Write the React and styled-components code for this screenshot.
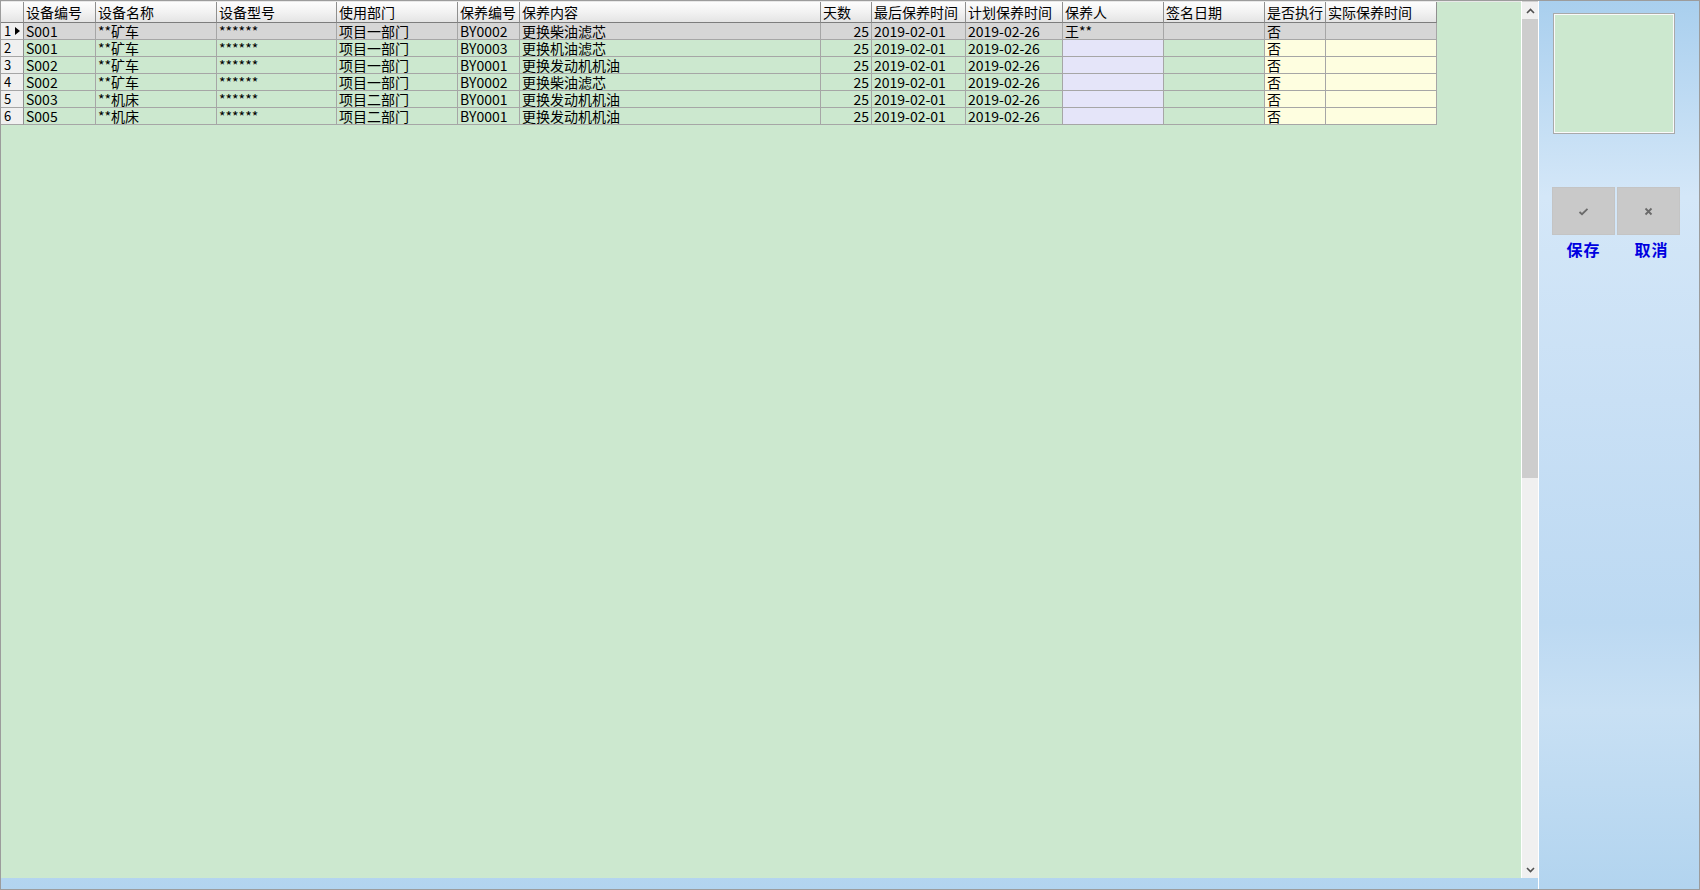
import React from "react";
import styled, { createGlobalStyle } from "styled-components";

const GlobalStyle = createGlobalStyle`
  html, body { margin: 0; padding: 0; background: #ffffff; }
  * { box-sizing: border-box; }
  body { font-family: "Noto Sans CJK SC", "Liberation Sans", sans-serif; }
`;

const COLS = [23, 72, 121, 120, 121, 62, 301, 51, 94, 97, 101, 101, 61, 111];

const HEADERS = [
  "",
  "设备编号",
  "设备名称",
  "设备型号",
  "使用部门",
  "保养编号",
  "保养内容",
  "天数",
  "最后保养时间",
  "计划保养时间",
  "保养人",
  "签名日期",
  "是否执行",
  "实际保养时间",
];

// column tint: g = green, l = lavender, y = yellow
const TINT = ["h", "g", "g", "g", "g", "g", "g", "g", "g", "g", "l", "g", "y", "y"];
const RIGHT = [false, false, false, false, false, false, false, true, false, false, false, false, false, false];

const ROWS = [
  ["S001", "**矿车", "******", "项目一部门", "BY0002", "更换柴油滤芯", "25", "2019-02-01", "2019-02-26", "王**", "", "否", ""],
  ["S001", "**矿车", "******", "项目一部门", "BY0003", "更换机油滤芯", "25", "2019-02-01", "2019-02-26", "", "", "否", ""],
  ["S002", "**矿车", "******", "项目一部门", "BY0001", "更换发动机机油", "25", "2019-02-01", "2019-02-26", "", "", "否", ""],
  ["S002", "**矿车", "******", "项目一部门", "BY0002", "更换柴油滤芯", "25", "2019-02-01", "2019-02-26", "", "", "否", ""],
  ["S003", "**机床", "******", "项目二部门", "BY0001", "更换发动机机油", "25", "2019-02-01", "2019-02-26", "", "", "否", ""],
  ["S005", "**机床", "******", "项目二部门", "BY0001", "更换发动机机油", "25", "2019-02-01", "2019-02-26", "", "", "否", ""],
];

const TINT_COLORS = {
  h: "#f0f0f0",
  g: "#cce8cf",
  l: "#e5e5f9",
  y: "#fefee0",
  s: "#d6d6d6",
};

const Window = styled.div`
  width: 1700px;
  height: 890px;
  border: 1px solid #9c9c9c;
  display: flex;
  overflow: hidden;
  background: linear-gradient(
    180deg,
    #a9cfee 0%,
    #d4e7f8 22%,
    #c9e0f5 45%,
    #bcd9f2 70%,
    #c8e0f4 80%,
    #b2d4ef 100%
  );
`;

const GridBlock = styled.div`
  width: 1537px;
  height: 877px;
  display: flex;
  flex-shrink: 0;
`;

const GridArea = styled.div`
  width: 1520px;
  height: 100%;
  background: #cce8cf;
  border-top: 1px solid #e8e8e8;
`;

const Divider = styled.div`
  width: 1px;
  height: 100%;
  background: #ffffff;
`;

const Table = styled.div`
  display: grid;
  grid-template-columns: ${COLS.map((w) => `${w}px`).join(" ")};
  grid-template-rows: 21px;
  grid-auto-rows: 17px;
  width: max-content;
`;

const HeaderCell = styled.div`
  padding: 0 2px;
  font-size: 14px;
  line-height: 20px;
  color: #000;
  white-space: nowrap;
  background: linear-gradient(180deg, #fdfdfd 0%, #f1f1f1 55%, #e4e4e4 100%);
  border-right: 1px solid #8f8f8f;
  border-bottom: 1px solid #7d7d7d;
`;

const Cell = styled.div`
  padding: 0 2px;
  font-size: 14px;
  line-height: 16px;
  color: #000;
  white-space: nowrap;
  text-align: ${(p) => (p.$right ? "right" : "left")};
  background: ${(p) => TINT_COLORS[p.$tint]};
  border-right: 1px solid #a6a6a6;
  border-bottom: 1px solid #a6a6a6;
`;

const RowHead = styled(Cell)`
  display: flex;
  align-items: center;
  gap: 4px;
  padding-left: 3px;
  font-size: 13px;
  background: #f0f0f0;
  border-right: 1px solid #8f8f8f;
`;

const Pointer = styled.span`
  width: 0;
  height: 0;
  border-top: 4px solid transparent;
  border-bottom: 4px solid transparent;
  border-left: 5px solid #000;
`;

const VScroll = styled.div`
  width: 16px;
  height: 100%;
  display: flex;
  flex-direction: column;
  background: #f0f0f0;
  border-top: 1px solid #d0d0d0;
`;

const ArrowBox = styled.div`
  height: 17px;
  display: flex;
  align-items: center;
  justify-content: center;
  background: #f0f0f0;
  flex-shrink: 0;
`;

const Thumb = styled.div`
  height: 459px;
  background: #cdcdcd;
  flex-shrink: 0;
`;

const Track = styled.div`
  flex: 1;
  background: #f0f0f0;
`;

const SidePanel = styled.div`
  flex: 1;
  height: 100%;
  border-left: 1px solid #ffffff;
  padding: 13px 0 0 15px;
  display: flex;
  flex-direction: column;
  align-items: flex-start;
`;

const Preview = styled.div`
  width: 120px;
  height: 119px;
  background: #cce8cf;
  border: 1px solid #fafafa;
  box-shadow: 0 0 0 1px #a9a9a9;
`;

const ButtonRow = styled.div`
  display: flex;
  gap: 2px;
  margin-top: 54px;
  margin-left: -2px;
`;

const ActionButton = styled.button`
  width: 63px;
  height: 48px;
  border: 1px solid #c4c4c4;
  background: #c9c9c9;
  padding: 0;
  margin: 0;
  display: flex;
  align-items: center;
  justify-content: center;
  cursor: pointer;
`;

const LabelRow = styled.div`
  display: flex;
  gap: 2px;
  margin-left: -2px;
  margin-top: 4px;
`;

const ActionLabel = styled.div`
  width: 63px;
  text-align: center;
  font-size: 16px;
  font-weight: 700;
  line-height: 20px;
  color: #0000e0;
  letter-spacing: 1px;
  padding-left: ${(p) => p.$shift || 0}px;
`;

function Chevron({ down }) {
  return (
    <svg width="9" height="6" viewBox="0 0 9 6">
      <polyline
        points={down ? "1,1 4.5,4.5 8,1" : "1,5 4.5,1.5 8,5"}
        fill="none"
        stroke="#505050"
        strokeWidth="1.6"
      />
    </svg>
  );
}

function CheckIcon() {
  return (
    <svg width="11" height="9" viewBox="0 0 11 9">
      <polyline points="1.5,5 4,7.2 9.5,1.8" fill="none" stroke="#6a6a6a" strokeWidth="1.8" />
    </svg>
  );
}

function CrossIcon() {
  return (
    <svg width="9" height="9" viewBox="0 0 9 9">
      <path d="M1.5 1.5 L7.5 7.5 M7.5 1.5 L1.5 7.5" stroke="#6a6a6a" strokeWidth="1.8" />
    </svg>
  );
}

export default function App() {
  return (
    <>
      <GlobalStyle />
      <Window>
        <GridBlock>
          <GridArea>
            <Table>
              {HEADERS.map((h, i) => (
                <HeaderCell key={`h${i}`}>{h}</HeaderCell>
              ))}
              {ROWS.map((row, r) => (
                <React.Fragment key={r}>
                  <RowHead $tint="h">
                    <span>{r + 1}</span>
                    {r === 0 && <Pointer />}
                  </RowHead>
                  {row.map((v, c) => (
                    <Cell
                      key={c}
                      $tint={r === 0 ? "s" : TINT[c + 1]}
                      $right={RIGHT[c + 1]}
                    >
                      {v}
                    </Cell>
                  ))}
                </React.Fragment>
              ))}
            </Table>
          </GridArea>
          <Divider />
          <VScroll>
            <ArrowBox>
              <Chevron />
            </ArrowBox>
            <Thumb />
            <Track />
            <ArrowBox>
              <Chevron down />
            </ArrowBox>
          </VScroll>
        </GridBlock>
        <SidePanel>
          <Preview />
          <ButtonRow>
            <ActionButton aria-label="保存">
              <CheckIcon />
            </ActionButton>
            <ActionButton aria-label="取消">
              <CrossIcon />
            </ActionButton>
          </ButtonRow>
          <LabelRow>
            <ActionLabel>保存</ActionLabel>
            <ActionLabel $shift={6}>取消</ActionLabel>
          </LabelRow>
        </SidePanel>
      </Window>
    </>
  );
}
